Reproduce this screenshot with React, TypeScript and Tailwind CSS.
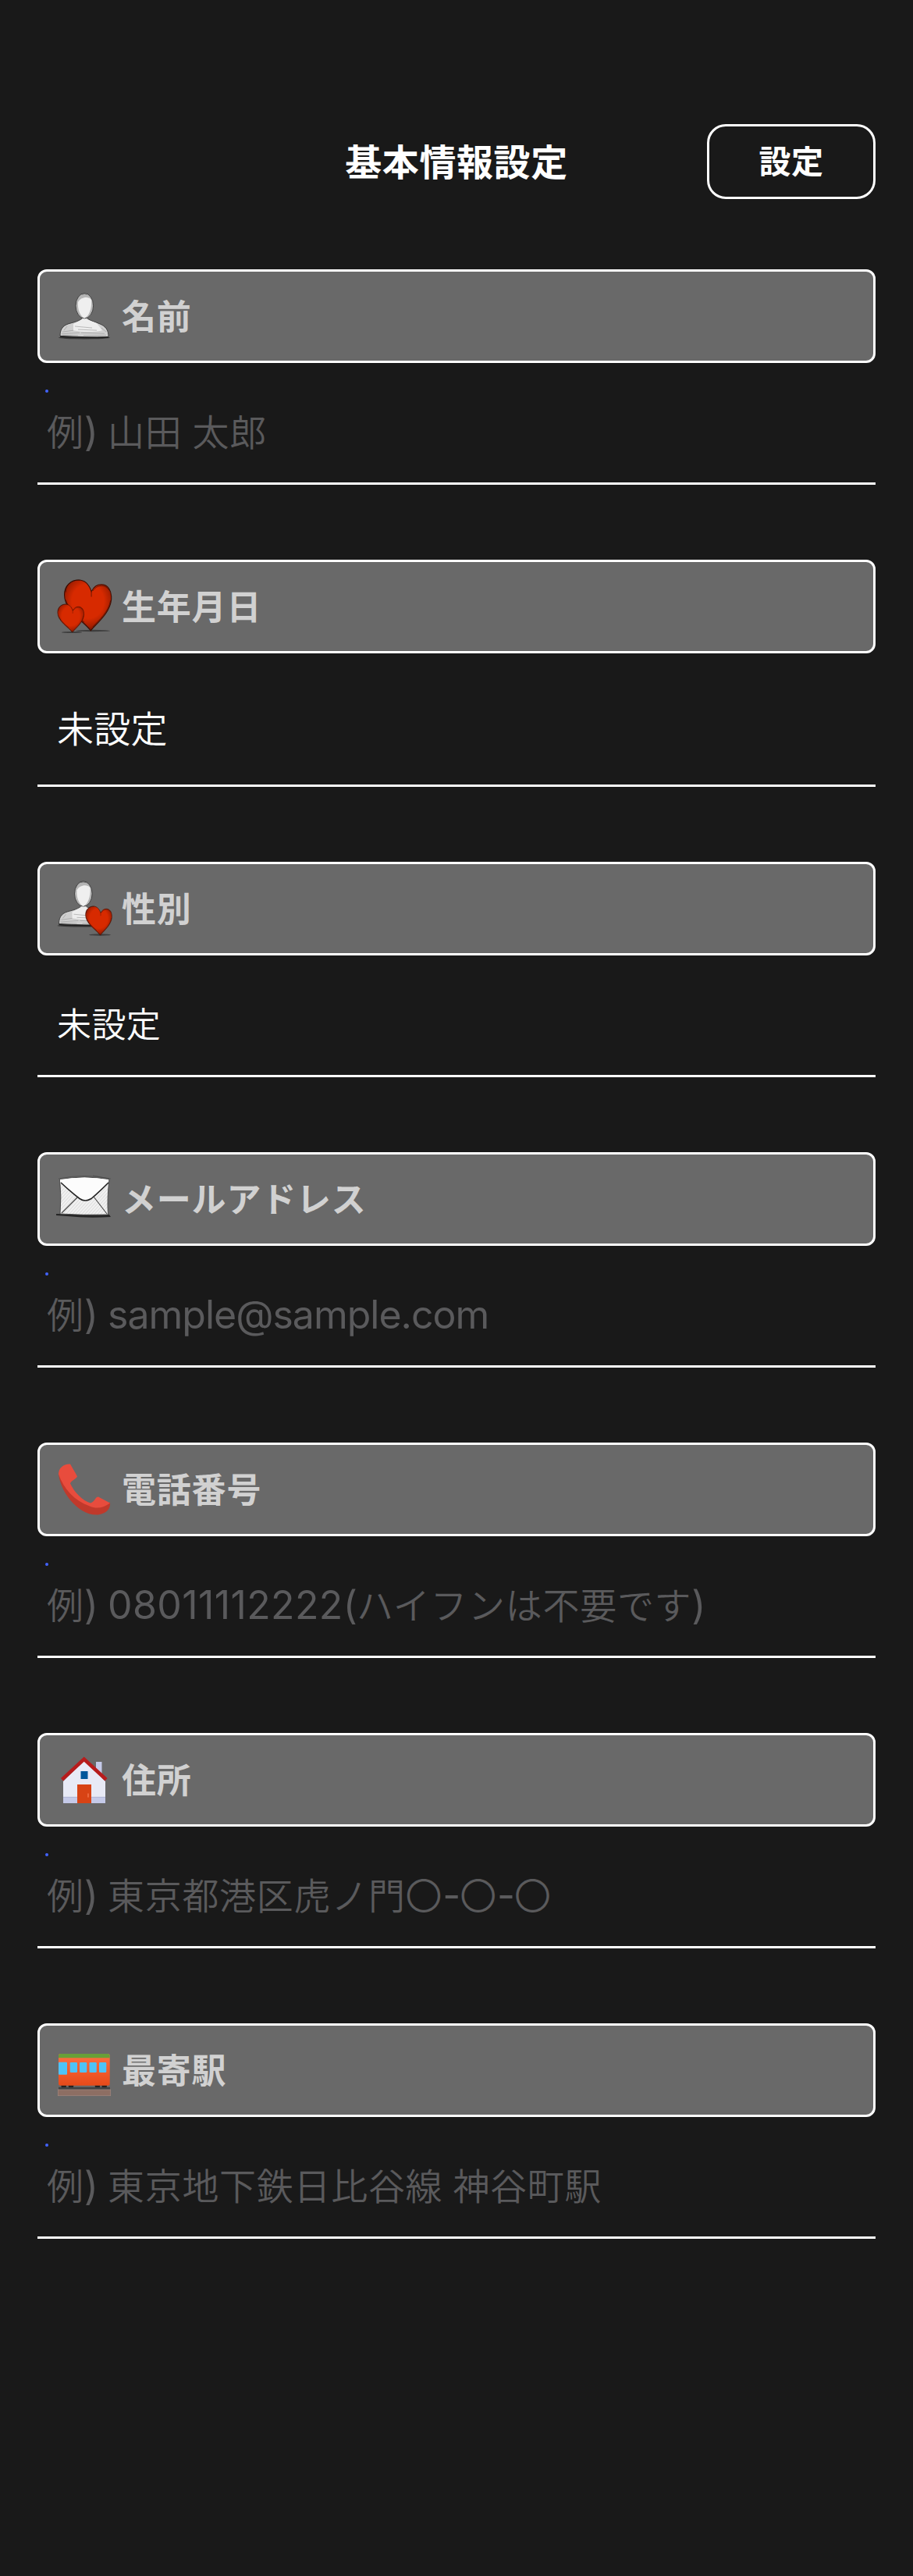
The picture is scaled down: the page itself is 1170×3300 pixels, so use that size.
import React from "react";

function Heart({ id }: { id: string }) {
  return (
    <>
      <path d="M1 62C-9 47-36 31-36 6C-36-8-27-17-16-17C-7-17-1-9 2 1C5-6 10-10 16-10C25-10 31-1 30 14C28 34 12 48 1 62Z" fill={`url(#${id})`} stroke="#3d0d02" strokeWidth="1.2" />
      <path d="M-34 2C-35-9-26-18-14-17M-34 14C-30 32-10 46-1 59M4 0C9-9 21-12 27-1M29 15C26 33 13 45 4 56M-32 20C-27 32-15 41-8 49" fill="none" stroke="#250801" strokeWidth="1" opacity=".6" />
      <path d="M2 0V9" stroke="#7a1800" strokeWidth="1.2" />
    </>
  );
}

function HeartFill({ id }: { id: string }) {
  return (
    <radialGradient id={id} cx=".5" cy=".42" r=".62">
      <stop offset=".55" stopColor="#d72a00" />
      <stop offset=".8" stopColor="#a61f00" />
      <stop offset="1" stopColor="#4d1000" />
    </radialGradient>
  );
}

function Person() {
  return (
    <>
      <ellipse cx="36" cy="64.300" rx="33" ry="1.6" fill="#222" opacity=".7" />
      <path d="M5 62C5 52 10 48 19 46C27 44 32 42 34 39H39C42 43 49 44 56 47C63 50 67 54 67 63C48 64 26 63 5 62Z" fill="#cfcfcf" stroke="#3a3a3a" strokeWidth=".9" />
      <path d="M22 47L36 40L52 46L59 55C45 58 33 57 22 55Z" fill="#ededed" />
      <path d="M8 57L22 55M7 59.500L30 58M24 50L46 52M28 54L52 55M32 58L62 59M35 61.500L64 61M8 61L28 61.500M58 52L64 57M14 50L10 55" stroke="#999" strokeWidth=".6" />
      <path d="M5 62.700Q30 65 67 63.500" fill="none" stroke="#222" strokeWidth="1.5" />
      <ellipse cx="36.300" cy="24.500" rx="11.3" ry="15.7" fill="#b5b5b5" stroke="#3a3a3a" strokeWidth=".9" />
      <path d="M27 16C30 7.500 42 7.500 45.500 16L43 12.500C39 9.500 33 9.500 29.500 12.500Z" fill="#4a4a4a" />
      <path d="M28 20C31 14 41 12 45 17C46 28 42 38 36 40C31 38 27 29 28 20Z" fill="#efefef" />
    </>
  );
}

const icons: Record<string, React.ReactNode> = {
  person: <g transform="translate(0 .5) scale(1 1.03)"><Person /></g>,
  hearts: (
    <>
      <defs><HeartFill id="h1" /><HeartFill id="h2" /></defs>
      <ellipse cx="47" cy="70" rx="22" ry="1.2" fill="#222" opacity=".6" />
      <ellipse cx="20" cy="72" rx="13" ry="1.1" fill="#222" opacity=".6" />
      <g transform="translate(43.3 19) scale(.91 .82)"><Heart id="h1" /></g>
      <g transform="translate(20.2 43.8) scale(.51 .456)"><Heart id="h2" /></g>
    </>
  ),
  personHeart: (
    <>
      <defs><HeartFill id="h3" /></defs>
      <g transform="translate(-1.5 -5.3) scale(1 1.03)"><Person /></g>
      <path d="M50 66H76V45L64 32L50 50Z" fill="#696969" />
      <ellipse cx="56" cy="72.5" rx="14" ry="1.2" fill="#222" opacity=".6" />
      <g transform="translate(56 44) scale(.51 .47)"><Heart id="h3" /></g>
    </>
  ),
  mail: (
    <>
      <defs>
        <pattern id="hatch" width="3" height="3" patternUnits="userSpaceOnUse" patternTransform="rotate(42)">
          <rect width="3" height="3" fill="#f2f2f2" /><rect width=".8" height="3" fill="#d8d8d8" />
        </pattern>
      </defs>
      <path d="M0 58L68 59L70 62Q40 64 14 61L0 60Z" fill="#262626" />
      <path d="M4.500 14Q36 8 68 14Q65 38 66.500 59Q34 60 5 58Q7 36 4.500 14Z" fill="url(#hatch)" stroke="#444" strokeWidth=".9" />
      <path d="M5 17L24 34Q37 48 50 34L67 17V14Q36 9 5 14Z" fill="#fcfcfc" />
      <path d="M6 18Q20 31 30 38.500Q37 43.500 45 38.500Q54 31 67 18" fill="none" stroke="#222" strokeWidth="1.6" />
      <path d="M27 37L7 57M48 36L65 58" stroke="#444" strokeWidth="1.1" />
      <path d="M3 13Q36 6 70 13M47 9L68 13" fill="none" stroke="#444" strokeWidth=".6" />
    </>
  ),
  phone: (
    <g transform="translate(0 2.5)">
      <path d="M3 15C4 38 28 71 54 69C65 67 70 61 69 53L60 58H48C30 50 16 35 12 18Z" fill="#c0392b" />
      <path d="M3 17C3 10 8 4 18 4C20 8 24 14 27 20C25 24 19 25 18 29C23 40 34 51 44 54C49 53 50 46 54 46L69 54C61 60 52 62 43 58C23 51 10 36 3 17Z" fill="#e84c3d" />
    </g>
  ),
  house: (
    <>
      <path d="M51 16H58.500V38H51Z" fill="#c5cae9" />
      <path d="M35.700 14L63 41V69H9V41Z" fill="#e8eaf6" />
      <path d="M9 61H63V69H9Z" fill="#c5cae9" />
      <path d="M9 61.300H63" stroke="#a9add0" strokeWidth=".8" />
      <path d="M35.700 9.500L6 37L9 40.500L35.700 15.700L62.500 40.500L65.600 37Z" fill="#b71c1c" />
      <rect x="31.5" y="28" width="9" height="10" fill="#01579b" />
      <rect x="27" y="45" width="18" height="24" fill="#d84315" />
      <rect x="40.500" y="56.500" width="1" height="5" fill="#ff8a65" />
    </>
  ),
  train: (
    <>
      <defs>
        <linearGradient id="tr" x2="0" y2="1"><stop stopColor="#ff7043" /><stop offset="1" stopColor="#e64a19" /></linearGradient>
      </defs>
      <g fill="#212121"><circle cx="9.700" cy="59" r="3.3" /><circle cx="19" cy="59" r="3.3" /><circle cx="53" cy="59" r="3.3" /><circle cx="61.700" cy="59" r="3.3" /></g>
      <rect x="3" y="60.800" width="66" height="3" fill="#424242" />
      <rect x="2.300" y="64" width="67.400" height="7.700" fill="#8d6e63" stroke="#a1887f" strokeWidth=".7" />
      <rect x="3" y="18" width="65.700" height="40.700" rx="2.5" fill="url(#tr)" />
      <path d="M3 23.300V21Q3 18 6 18H65.700Q68.700 18 68.700 21V23.300Z" fill="#689f38" />
      <g fill="#4fc3f7"><rect x="3" y="28.700" width="11" height="16" rx="1" /><rect x="17.700" y="29" width="9.300" height="13" rx="1.3" /><rect x="30" y="29" width="9.300" height="13" rx="1.3" /><rect x="42.500" y="29" width="9.300" height="13" rx="1.3" /><rect x="55" y="29" width="9.300" height="13" rx="1.3" /></g>
    </>
  ),
};

type Field = { icon: string; label: string; kind: "input" | "date" | "select"; text: string };

const fields: Field[] = [
  { icon: "person", label: "名前", kind: "input", text: "例) 山田 太郎" },
  { icon: "hearts", label: "生年月日", kind: "date", text: "未設定" },
  { icon: "personHeart", label: "性別", kind: "select", text: "未設定" },
  { icon: "mail", label: "メールアドレス", kind: "input", text: "例) sample@sample.com" },
  { icon: "phone", label: "電話番号", kind: "input", text: "例) 08011112222(ハイフンは不要です)" },
  { icon: "house", label: "住所", kind: "input", text: "例) 東京都港区虎ノ門〇-〇-〇" },
  { icon: "train", label: "最寄駅", kind: "input", text: "例) 東京地下鉄日比谷線 神谷町駅" },
];

// ASCII runs are set slightly larger and heavier than the Japanese text around them.
function Placeholder({ text }: { text: string }) {
  return (
    <>
      {text.split(/([0-9]+|[\x20-\x2f\x3a-\x7e]+)/).filter(Boolean).map((part, i) => {
        if (/^[0-9]/.test(part)) return <span key={i} className="text-[50px] font-normal tracking-[0.4px]">{part}</span>;
        if (/^[\x20-\x7e]/.test(part)) return <span key={i} className="text-[50px] font-normal tracking-[-1px]">{part}</span>;
        return <span key={i}>{part}</span>;
      })}
    </>
  );
}

function FieldRow({ icon, label, kind, text }: Field) {
  return (
    <section>
      <div className="flex h-[120px] items-center rounded-[12px] border-[3px] border-white bg-[#696969] pl-[21px]">
        <svg className="h-[78px] w-[75px] shrink-0" viewBox="0 0 75 78">{icons[icon]}</svg>
        <span className="ml-[9px] pt-[2px] text-[44px] leading-none font-bold tracking-[0.8px] text-[#d1d1d1]">{label}</span>
      </div>
      {kind === "input" && (
        <div className="h-[156px] border-b-[3px] border-white pl-[12px]">
          <div className="pt-[34px]"><div className="-ml-[2px] size-[4px] rounded-full bg-[#4263ff]" /></div>
          <div className="mt-[20px] text-[47px] leading-[60px] font-[350] tracking-[0.7px] whitespace-pre text-[#5a5a5c]"><Placeholder text={text} /></div>
        </div>
      )}
      {kind === "date" && <div className="flex h-[171px] items-center border-b-[3px] border-white pt-[26px] pl-[25px] text-[47px] leading-[60px] font-[350] tracking-[0.3px] text-white">{text}</div>}
      {kind === "select" && <div className="flex h-[156px] items-center border-b-[3px] border-white pt-[24px] pl-[25px] text-[44px] leading-[60px] font-[350] tracking-[0.4px] text-white">{text}</div>}
    </section>
  );
}

export default function App() {
  return (
    <main lang="ja" className="min-h-[3300px] w-[1170px] bg-[#191919] px-[48px] pt-[159px] font-['Inter','Noto_Sans_CJK_JP',sans-serif]">
      <header className="grid h-[96px] grid-cols-[216px_1fr_216px] items-center">
        <h1 className="col-start-2 text-center text-[47px] leading-none font-bold tracking-[0.6px] text-white">基本情報設定</h1>
        <button className="h-[96px] rounded-[24px] border-[3px] border-white text-[41px] leading-none font-bold tracking-[0.6px] text-white">設定</button>
      </header>
      <div className="mt-[90px] flex flex-col gap-[96px]">
        {fields.map((f) => <FieldRow key={f.label} {...f} />)}
      </div>
    </main>
  );
}
